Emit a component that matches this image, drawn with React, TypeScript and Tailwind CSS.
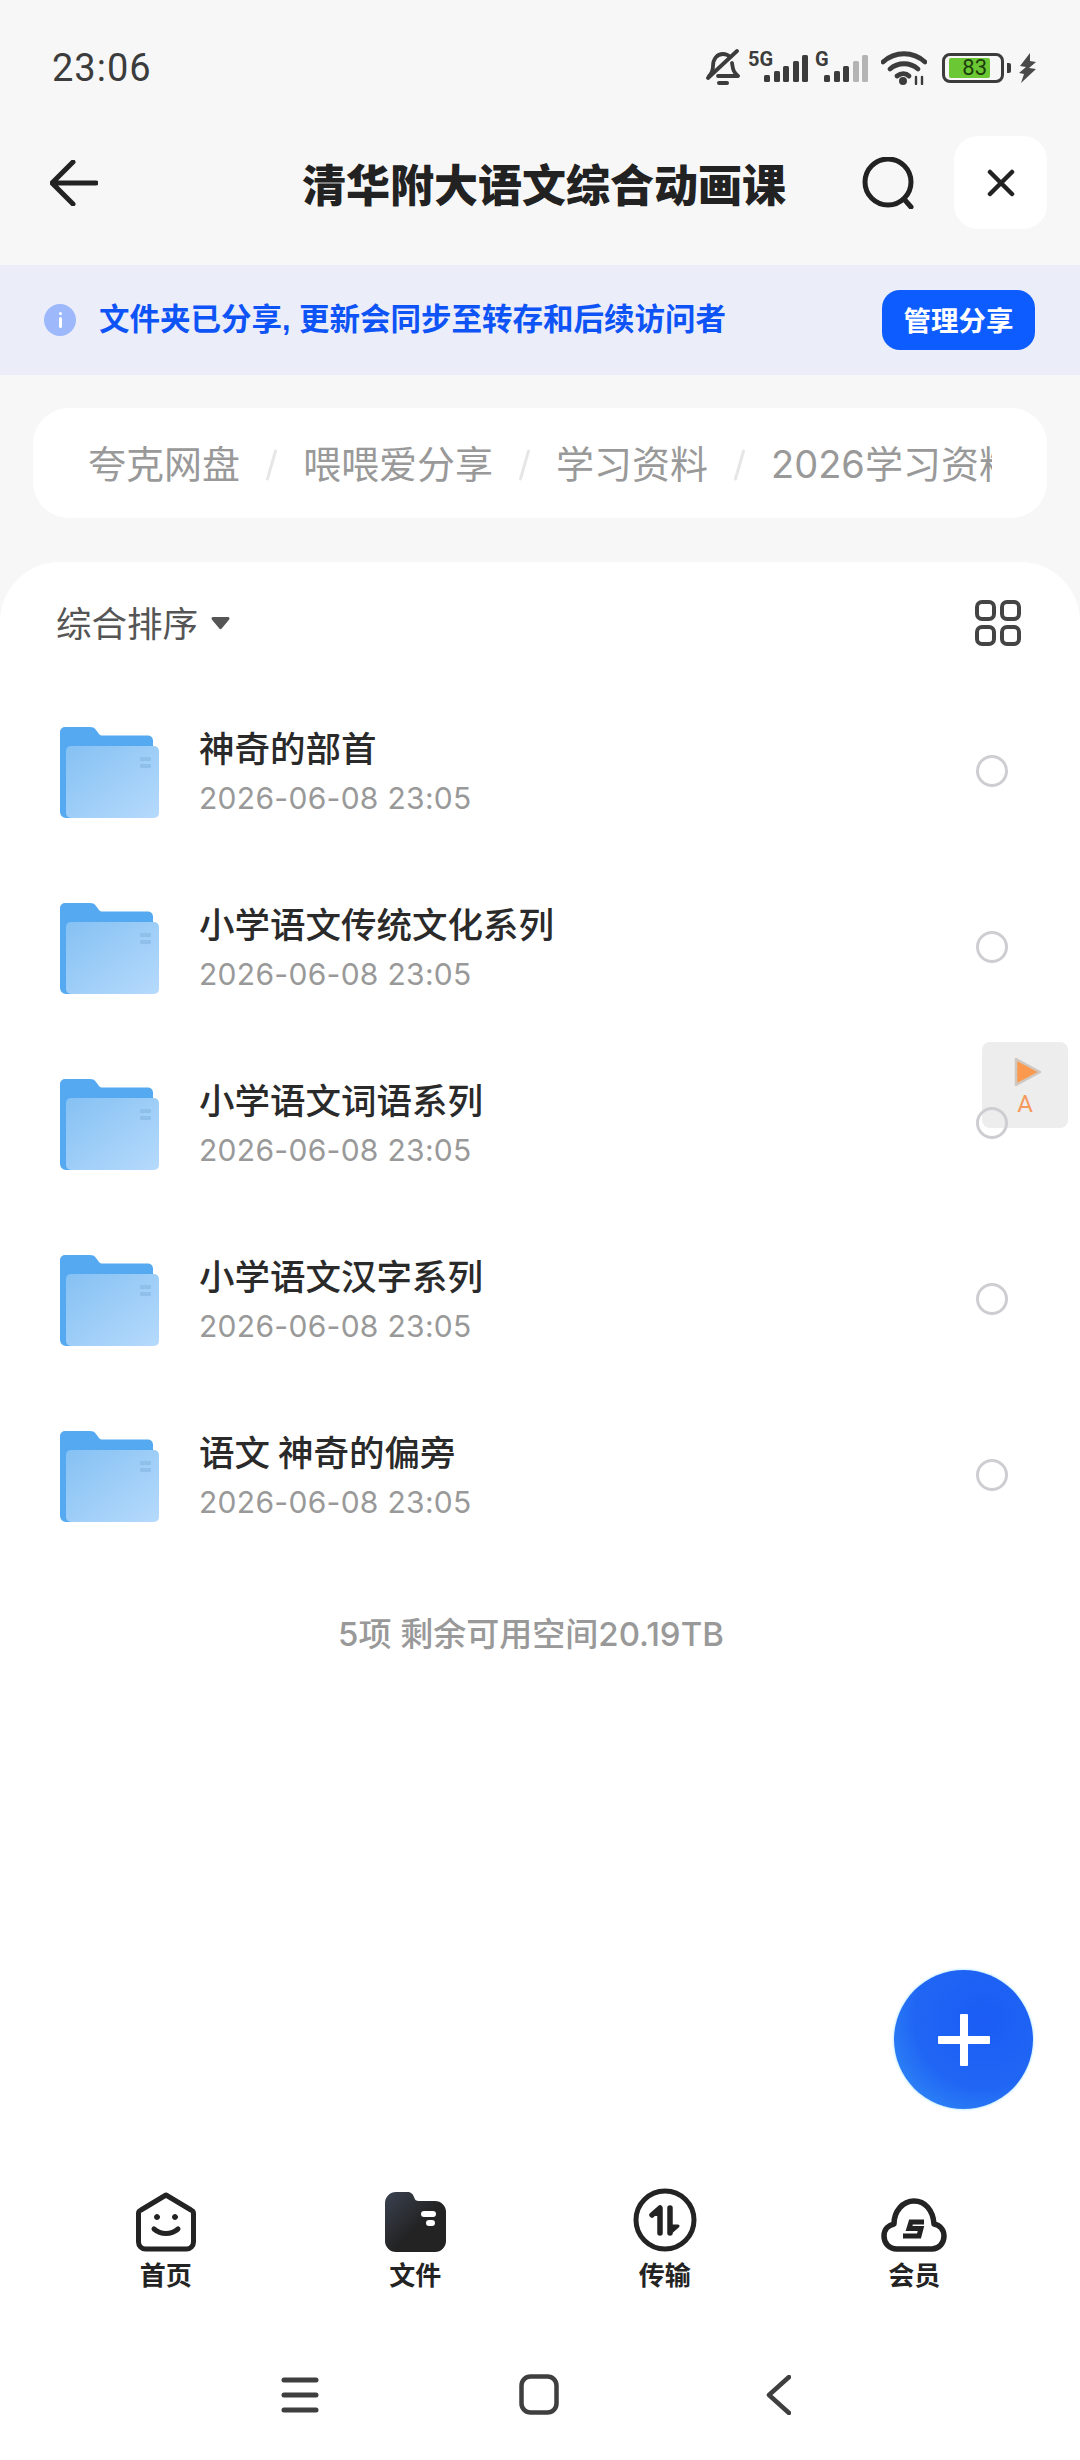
const folders = ['神奇的部首', '小学语文传统文化系列', '小学语文词语系列', '小学语文汉字系列', '语文 神奇的偏旁']

const crumbs = ['夸克网盘', '喂喂爱分享', '学习资料', '2026学习资料']

function Signal({ label, dim }: { label: string; dim?: boolean }) {
  return (
    <svg width="60" height="32" viewBox="0 0 60 32" className="overflow-visible">
      <text x={label.length > 1 ? 0 : 7} y="14" fontSize="20" fontWeight="700" fill="#3c3c3c" fontFamily="Roboto, sans-serif">{label}</text>
      <g fill="#3c3c3c">
        <rect x="16" y="23" width="6" height="7" rx="1.5" />
        <rect x="26" y="19" width="6" height="11" rx="1.5" />
        <rect x="35" y="14" width="6" height="16" rx="1.5" />
        <rect x="45" y="9" width="6" height="21" rx="1.5" fill={dim ? '#b4b4b4' : '#3c3c3c'} />
        <rect x="54" y="3" width="6" height="27" rx="1.5" fill={dim ? '#b4b4b4' : '#3c3c3c'} />
      </g>
    </svg>
  )
}

function StatusIcons() {
  return (
    <div className="flex items-center">
      <svg width="34" height="38" viewBox="0 0 34 38" fill="none" stroke="#3c3c3c" strokeWidth="3.8" strokeLinecap="round" strokeLinejoin="round">
        <path d="M3 27c3-3 4-5 4-10 0-7 4-12 10-12 3 0 5 1 7 3M26 14c1 6 1 9 6 13H12" />
        <path d="M2 29 31 2" />
        <path d="M13 34h8" strokeWidth="4" />
      </svg>
      <div className="ml-[8px]"><Signal label="5G" /></div>
      <Signal label="G" dim />
      <svg className="ml-[13px]" width="46" height="34" viewBox="0 0 46 34" fill="none" stroke="#3c3c3c" strokeWidth="4.8" strokeLinecap="round">
        <path d="M2 11c12-11 30-11 42 0" />
        <path d="M9 18c8-7 20-7 28 0" />
        <path d="M16 25c4-3 9-3 12 0" />
        <circle cx="22" cy="30" r="1.6" fill="#3c3c3c" />
        <path d="M35 26v7M41 26v7" strokeWidth="2.4" />
      </svg>
      <div className="ml-[15px] flex h-[30px] w-[62px] items-center rounded-[8px] border-[3px] border-[#3c3c3c] pl-[4px]">
        <div className="flex h-[20px] w-[41px] items-center justify-end rounded-[2px] bg-[#6cc734] pr-[3px] font-['Roboto'] text-[22px] leading-none text-[#1c3d0c]">83</div>
      </div>
      <div className="ml-[3px] h-[10px] w-[4px] rounded-r-[2px] bg-[#3c3c3c]" />
      <svg className="ml-[8px]" width="17" height="30" viewBox="0 0 17 30" fill="#4a4a4a">
        <path d="M11 0 1 13l6 1-7 6 5 1-3 9 15-14-7-1 7-6-6-1z" />
      </svg>
    </div>
  )
}

function FolderIcon() {
  return (
    <svg width="100" height="94" viewBox="0 0 100 94" className="mt-[5px] shrink-0">
      <defs>
        <linearGradient id="folderFront" x1="0" y1="0" x2="1" y2="1">
          <stop offset="0" stopColor="#85c1f3" />
          <stop offset="1" stopColor="#b6dafc" />
        </linearGradient>
      </defs>
      <path d="M0 5a5 5 0 0 1 5-5h25c3 0 5 1 6 3l3 4c1 1 2 1.500 4 1.500h45a5 5 0 0 1 5 5V85a6 6 0 0 1-6 6H6a6 6 0 0 1-6-6z" fill="#54a9f0" />
      <rect x="6" y="19" width="93" height="72" rx="5" fill="url(#folderFront)" />
      <rect x="80" y="30" width="11" height="4" rx="1" fill="#8fc0ec" />
      <rect x="80" y="37" width="11" height="4" rx="1" fill="#8fc0ec" />
    </svg>
  )
}

function HomeIcon() {
  return (
    <svg width="60" height="60" viewBox="0 0 60 60" fill="none" stroke="#232323" strokeWidth="5" strokeLinecap="round" strokeLinejoin="round">
      <path d="M30 3 55 18a4 4 0 0 1 2.500 4v28a7 7 0 0 1-7 7h-41a7 7 0 0 1-7-7V22a4 4 0 0 1 2.500-4z" />
      <path d="M18 37c7 6 17 6 24 0" />
      <circle cx="21" cy="25" r="2.500" fill="#232323" strokeWidth="1" />
      <circle cx="39" cy="25" r="2.500" fill="#232323" strokeWidth="1" />
    </svg>
  )
}

function FilesIcon() {
  return (
    <svg width="61" height="60" viewBox="0 0 61 60">
      <defs>
        <linearGradient id="filesFill" x1="0" y1="0" x2="1" y2="1">
          <stop offset="0" stopColor="#3b4352" />
          <stop offset="0.55" stopColor="#232323" />
        </linearGradient>
      </defs>
      <path d="M0 11A11 11 0 0 1 11 0h11c4 0 6 2 7 5 1 3 2 4 5 4h16a11 11 0 0 1 11 11v29a11 11 0 0 1-11 11H11A11 11 0 0 1 0 49z" fill="url(#filesFill)" />
      <rect x="36" y="19" width="15" height="6" rx="3" fill="#fff" />
      <rect x="41" y="28" width="9" height="6" rx="3" fill="#fff" />
    </svg>
  )
}

function TransferIcon() {
  return (
    <svg width="64" height="64" viewBox="0 0 64 64" fill="none" stroke="#232323" strokeLinecap="round" strokeLinejoin="round">
      <circle cx="32" cy="32" r="29" strokeWidth="5" />
      <path d="M19 27 27 20V45" strokeWidth="5.500" />
      <path d="M27 20 19 27H27z" fill="#232323" strokeWidth="2" />
      <path d="M37 20V45" strokeWidth="5.500" />
      <path d="M37 45 45 38H37z" fill="#232323" strokeWidth="3" />
    </svg>
  )
}

function VipIcon() {
  return (
    <svg width="66" height="54" viewBox="0 0 66 54" fill="none" stroke="#232323" strokeWidth="5.500">
      <path d="M16 51C8 51 3 45 3 38c0-7 5-11 10-12 0-13 9-23 20-23s19 9 20 23c6 1 10 6 10 12 0 7-5 13-12 13z" strokeLinejoin="round" />
      <path d="M43 24H30l-2 6.500h12l-2 7.500H22" strokeWidth="5" />
    </svg>
  )
}

const tabs = [
  { label: '首页', icon: <HomeIcon /> },
  { label: '文件', icon: <FilesIcon /> },
  { label: '传输', icon: <TransferIcon /> },
  { label: '会员', icon: <VipIcon /> },
]

export default function App() {
  return (
    <div className="relative flex h-[2460px] w-[1080px] flex-col overflow-hidden bg-[#f7f7f7] font-['Noto_Sans_CJK_SC',sans-serif]">
      {/* status bar */}
      <div className="flex h-[136px] items-center justify-between pl-[52px] pr-[44px]">
        <span className="font-['Roboto'] text-[38px] leading-none tracking-[1px] text-[#3c3c3c]">23:06</span>
        <StatusIcons />
      </div>

      {/* nav */}
      <div className="flex h-[93px] items-center pl-[50px] pr-[33px]">
        <svg width="48" height="46" viewBox="0 0 48 46" fill="none" stroke="#222" strokeWidth="5" strokeLinecap="round" strokeLinejoin="round">
          <path d="M46 23H3M23 2 2 23l21 21" />
        </svg>
        <h1 className="ml-[204px] text-[44px] font-black leading-normal text-[#222]">清华附大语文综合动画课</h1>
        <svg className="ml-auto" width="54" height="52" viewBox="0 0 54 52" fill="none" stroke="#222" strokeWidth="5" strokeLinecap="round">
          <circle cx="26" cy="25" r="23" />
          <path d="m42 42 7 8" />
        </svg>
        <div className="ml-[38px] flex h-[93px] w-[93px] items-center justify-center rounded-[24px] bg-white">
          <svg width="28" height="28" viewBox="0 0 28 28" fill="none" stroke="#222" strokeWidth="4.500" strokeLinecap="round">
            <path d="m3 3 22 22M25 3 3 25" />
          </svg>
        </div>
      </div>

      {/* share banner */}
      <div className="mt-[36px] flex h-[110px] items-center bg-[#ebeef9] pl-[44px] pr-[45px]">
        <div className="flex h-[32px] w-[32px] items-center justify-center rounded-full bg-[#9db9fb]">
          <div className="flex flex-col items-center gap-[2px]">
            <div className="h-[3px] w-[3px] rounded-full bg-white" />
            <div className="h-[11px] w-[3px] rounded-full bg-white" />
          </div>
        </div>
        <span className="ml-[23px] font-['Liberation_Sans','Noto_Sans_CJK_SC',sans-serif] text-[30.500px] font-bold leading-normal text-[#0d53f5]">文件夹已分享, 更新会同步至转存和后续访问者</span>
        <div className="ml-auto flex h-[60px] w-[153px] items-center justify-center rounded-[18px] bg-[#0d5cff] text-[27.500px] font-bold leading-normal text-white">管理分享</div>
      </div>

      {/* breadcrumb */}
      <div className="mx-[33px] mt-[33px] flex h-[110px] items-center rounded-[36px] bg-white px-[55px]">
        <div className="mt-[3px] flex flex-1 items-center overflow-hidden whitespace-nowrap font-['Inter','Noto_Sans_CJK_SC',sans-serif] text-[38px] leading-normal text-[#999]">
          {crumbs.map((c, i) => (
            <div key={c} className="flex shrink-0 items-center">
              {i > 0 && <div className="mx-[30px] h-[32px] w-[3px] rotate-[16deg] rounded-full bg-[#e6e6e6]" />}
              <span>{c}</span>
            </div>
          ))}
        </div>
      </div>

      {/* sheet */}
      <div className="mt-[44px] flex flex-1 flex-col rounded-t-[60px] bg-white">
        <div className="flex h-[121px] items-center pl-[56px] pr-[59px]">
          <span className="mb-[2px] text-[35.500px] leading-normal text-[#555]">综合排序</span>
          <svg className="ml-[13px]" width="19" height="14" viewBox="0 0 19 14" fill="#555">
            <path d="M2 1h15a1.500 1.500 0 0 1 1.200 2.400l-7.500 9a1.500 1.500 0 0 1-2.400 0l-7.500-9A1.500 1.500 0 0 1 2 1z" />
          </svg>
          <svg className="ml-auto" width="46" height="46" viewBox="0 0 46 46" fill="none" stroke="#444" strokeWidth="4">
            <rect x="2" y="2" width="17" height="17" rx="5" />
            <rect x="27" y="2" width="17" height="17" rx="5" />
            <rect x="2" y="27" width="17" height="17" rx="5" />
            <rect x="27" y="27" width="17" height="17" rx="5" />
          </svg>
        </div>

        <div className="flex flex-col">
          {folders.map(name => (
            <div key={name} className="flex h-[176px] items-center pl-[60px] pr-[72px]">
              <FolderIcon />
              <div className="ml-[39px] flex flex-col gap-[11px]">
                <span className="text-[35.500px] font-medium leading-[1.2] text-[#2a2a2a]">{name}</span>
                <span className="font-['Inter'] text-[30px] leading-[1.2] tracking-[0.3px] text-[#999]">2026-06-08 23:05</span>
              </div>
              <div className="relative z-10 ml-auto h-[32px] w-[32px] rounded-full border-[3px] border-[#cdcdd2]" />
            </div>
          ))}
        </div>

        <div className="mt-[52px] pr-[18px] text-center font-['Inter','Noto_Sans_CJK_SC',sans-serif] text-[33px] font-medium leading-[1.2] text-[#999]">5项 剩余可用空间20.19TB</div>

        <div className="mt-auto grid grid-cols-4 px-[41px]">
          {tabs.map(t => (
            <div key={t.label} className="flex flex-col items-center">
              <div className="flex h-[64px] items-end">{t.icon}</div>
              <span className="mt-[6px] text-[26px] font-bold leading-[1.2] text-[#232323]">{t.label}</span>
            </div>
          ))}
        </div>

        <div className="mb-[45px] mt-[85px] flex items-center justify-between pl-[281px] pr-[289px]">
          <svg width="38" height="36" viewBox="0 0 38 36" fill="none" stroke="#3f3f3f" strokeWidth="5" strokeLinecap="round">
            <path d="M3 3h32M3 18h32M3 33h32" />
          </svg>
          <svg className="mr-[7px]" width="40" height="41" viewBox="0 0 40 41" fill="none" stroke="#3f3f3f" strokeWidth="4.500">
            <rect x="2.500" y="2.500" width="35" height="36" rx="9" />
          </svg>
          <svg width="25" height="40" viewBox="0 0 25 40" fill="none" stroke="#3f3f3f" strokeWidth="4.500" strokeLinecap="round" strokeLinejoin="round">
            <path d="M23 2 3 20l20 18" />
          </svg>
        </div>
      </div>

      {/* floating player */}
      <div className="absolute left-[982px] top-[1042px] flex h-[86px] w-[86px] flex-col items-center rounded-[8px] bg-[#ededed] pt-[15px]">
        <svg className="ml-[5px]" width="28" height="30" viewBox="0 0 28 30" fill="#fb9a4e" stroke="#cfc8c2" strokeWidth="2.500" strokeLinejoin="round">
          <path d="M2 2 26 15 2 28z" />
        </svg>
        <span className="mt-[3px] font-['Roboto'] text-[24px] leading-[1.2] text-[#f59a5c]">A</span>
      </div>

      {/* add button */}
      <div className="absolute left-[894px] top-[1970px] flex h-[139px] w-[139px] items-center justify-center rounded-full bg-[radial-gradient(circle_at_65%_35%,#1a5cf5_0%,#2066f4_55%,#2b7ff6_78%,#30b4fb_100%)] shadow-[0_0_3px_#8fdcff]">
        <div className="relative h-[52px] w-[52px]">
          <div className="absolute left-0 top-[22px] h-[8px] w-[52px] rounded-[1px] bg-white" />
          <div className="absolute left-[22px] top-0 h-[52px] w-[8px] rounded-[1px] bg-white" />
        </div>
      </div>
    </div>
  )
}
